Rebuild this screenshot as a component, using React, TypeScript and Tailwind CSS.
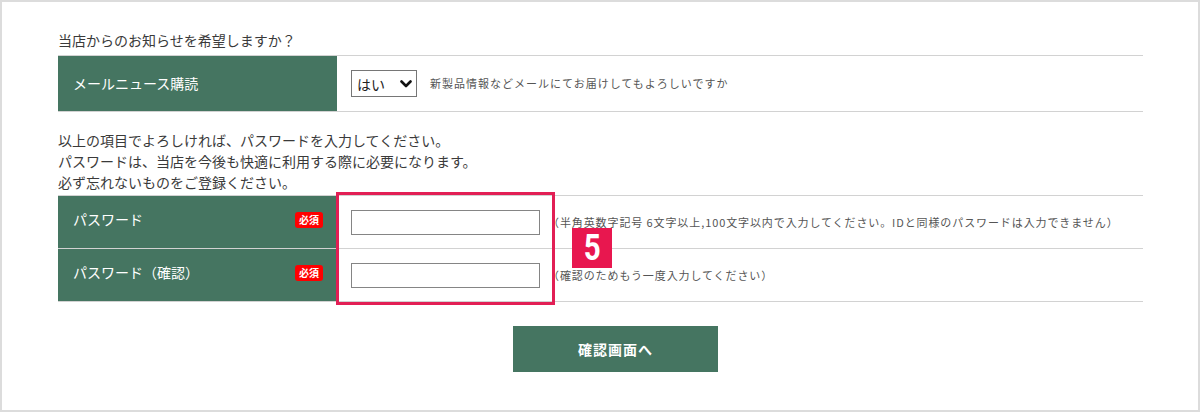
import React from "react";

const GREEN = "bg-[#457561]";

function RequiredBadge() {
  return (
    <span className="inline-flex h-[16px] w-[28px] items-center justify-center rounded-[3px] bg-[#ff0000] text-[10px] font-bold leading-none text-white">
      必須
    </span>
  );
}

function Chevron() {
  return (
    <svg width="12" height="8" viewBox="0 0 12 8" className="pointer-events-none absolute right-[5px] top-[10px]">
      <path d="M1.5 1.5 L6 6 L10.5 1.5" fill="none" stroke="#111" strokeWidth="2.6" strokeLinecap="round" strokeLinejoin="round" />
    </svg>
  );
}

export default function App() {
  return (
    <div className="h-[412px] w-[1200px] border-2 border-[#dcdcdc] bg-white font-['Noto_Sans_CJK_JP',sans-serif] text-[#3a3a3a]">
      <div className="w-[1141px] pl-[56px] pt-[28px]">
        <p className="mb-[4px] h-[21px] text-[14px] leading-[21px]">当店からのお知らせを希望しますか？</p>

        {/* mail news subscription */}
        <div className="flex h-[57px] border-y border-[#d2d2d2]">
          <div className={`flex w-[279px] items-center pl-[15px] text-[14px] text-white ${GREEN}`}>
            メールニュース購読
          </div>
          <div className="flex items-center pl-[14px]">
            <div className="relative h-[27px] w-[66px]">
              <select
                defaultValue="yes"
                className="h-full w-full appearance-none border border-[#767676] bg-white pl-[5px] text-[14px] leading-none text-[#222] outline-none"
              >
                <option value="yes">はい</option>
                <option value="no">いいえ</option>
              </select>
              <Chevron />
            </div>
            <span className="ml-[13px] text-[11px] tracking-[1px] text-[#555]">
              新製品情報などメールにてお届けしてもよろしいですか
            </span>
          </div>
        </div>

        <div className="mt-[18px] text-[14px] leading-[21px]">
          <p>以上の項目でよろしければ、パスワードを入力してください。</p>
          <p>パスワードは、当店を今後も快適に利用する際に必要になります。</p>
          <p>必ず忘れないものをご登録ください。</p>
        </div>

        {/* password rows */}
        <div className="relative mt-[2px] border-t border-[#d2d2d2]">
          <div className="flex h-[53px] border-b border-[#d2d2d2]">
            <div className={`flex w-[279px] items-center justify-between pb-[5px] pl-[15px] pr-[14px] text-[14px] text-white ${GREEN}`}>
              <span>パスワード</span>
              <RequiredBadge />
            </div>
            <div className="flex items-center pl-[14px]">
              <input type="password" className="h-[25px] w-[189px] border border-[#858585] bg-white outline-none" />
              <span className="ml-[8px] text-[11px] tracking-[0.9px] text-[#555]">
                （半角英数字記号 6文字以上,100文字以内で入力してください。IDと同様のパスワードは入力できません）
              </span>
            </div>
          </div>
          <div className="flex h-[53px] border-b border-[#d2d2d2]">
            <div className={`flex w-[279px] items-center justify-between pb-[5px] pl-[15px] pr-[14px] text-[14px] text-white ${GREEN}`}>
              <span>パスワード（確認）</span>
              <RequiredBadge />
            </div>
            <div className="flex items-center pl-[14px]">
              <input type="password" className="h-[25px] w-[189px] border border-[#858585] bg-white outline-none" />
              <span className="ml-[8px] text-[11px] tracking-[0.9px] text-[#555]">
                （確認のためもう一度入力してください）
              </span>
            </div>
          </div>

          {/* step highlight */}
          <div className="pointer-events-none absolute left-[278px] top-[-4px] h-[113px] w-[219px] border-[3px] border-[#e21f55]" />
          <div className="absolute left-[514px] top-[32px] flex h-[40px] w-[40px] items-center justify-center bg-[#e8174f] font-['Roboto',sans-serif] text-[36px] font-bold leading-none text-white">
            <span className="inline-block scale-x-[0.82]">5</span>
          </div>
        </div>

        <div className="mt-[24px] pl-[455px]">
          <button className={`h-[46px] w-[205px] text-[14px] font-bold tracking-[1px] text-white ${GREEN}`}>
            確認画面へ
          </button>
        </div>
      </div>
    </div>
  );
}
